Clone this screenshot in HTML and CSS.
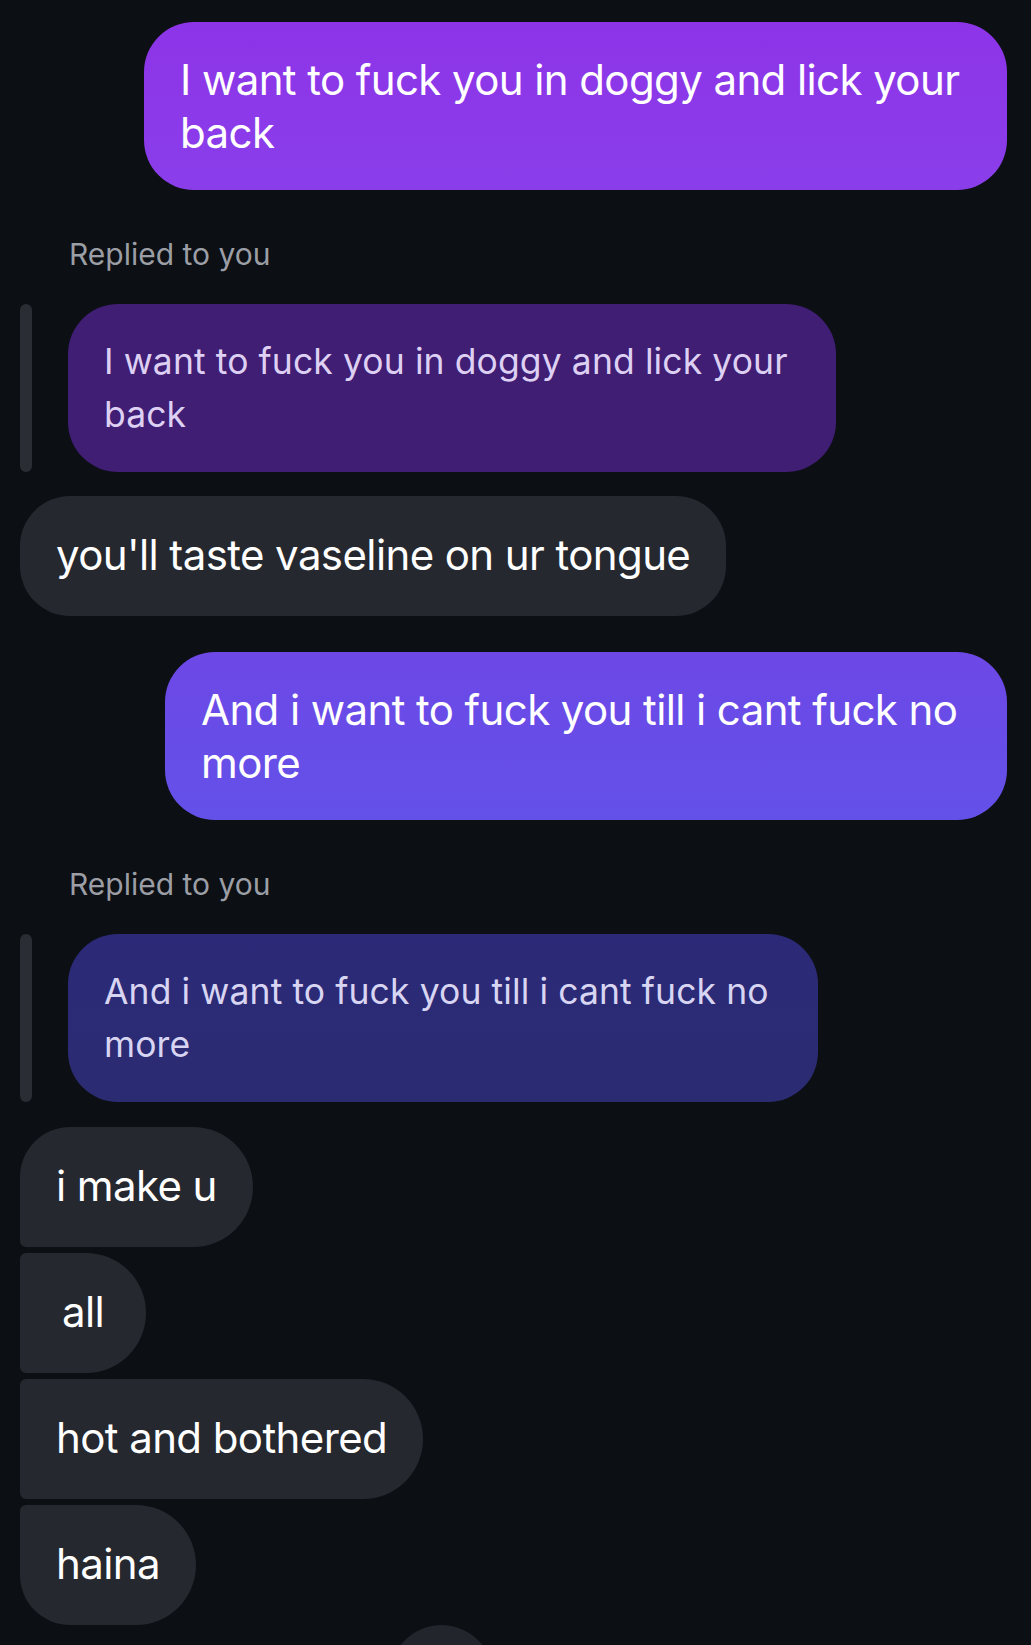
FILE: index.html
```html
<!DOCTYPE html>
<html lang="en">
<head>
<meta charset="utf-8">
<title>Chat</title>
<link rel="stylesheet" href="styles.css">
</head>
<body>
<main class="thread">
  <div class="row row-sent first">
    <div class="bubble sent sent-violet">I want to fuck you in doggy and lick your back</div>
  </div>

  <div class="reply-label">Replied to you</div>
  <div class="quote-row">
    <div class="quote-bar"></div>
    <div class="quote quote-violet">I want to fuck you in doggy and lick your back</div>
  </div>

  <div class="row row-recv gap-sm">
    <div class="bubble recv single">you'll taste vaseline on ur tongue</div>
  </div>

  <div class="row row-sent gap-md">
    <div class="bubble sent sent-indigo">And i want to fuck you till i cant fuck no more</div>
  </div>

  <div class="reply-label">Replied to you</div>
  <div class="quote-row">
    <div class="quote-bar"></div>
    <div class="quote quote-indigo">And i want to fuck you till i cant fuck no more</div>
  </div>

  <div class="stack">
    <div class="bubble recv single first-in-stack">i make u</div>
    <div class="bubble recv single mid-in-stack">all</div>
    <div class="bubble recv single mid-in-stack">hot and bothered</div>
    <div class="bubble recv single last-in-stack">haina</div>
  </div>

  <div class="peek"></div>
</main>
</body>
</html>
```

FILE: styles.css
```css
html, body {
  margin: 0;
  padding: 0;
  background: #0c0f14;
}

body {
  font-family: Inter, "Noto Sans", "DejaVu Sans", sans-serif;
  color: #ffffff;
  overflow: hidden;
}

.thread {
  display: flex;
  flex-direction: column;
  padding: 22px 24px 0 20px;
}

.row {
  display: flex;
}

.row-sent {
  justify-content: flex-end;
}

.row-recv {
  justify-content: flex-start;
}

.gap-sm {
  margin-top: 24px;
}

.gap-md {
  margin-top: 36px;
}

.bubble {
  box-sizing: border-box;
  font-size: 42px;
  line-height: 53px;
  padding: 31px 28px 31px 36px;
  border-radius: 50px;
  letter-spacing: -0.6px;
}

.single {
  min-height: 120px;
  min-width: 126px;
  display: flex;
  align-items: center;
  justify-content: center;
  padding-top: 0;
  padding-bottom: 3px;
  padding-right: 36px;
}

.sent-violet {
  width: 863px;
  background: linear-gradient(180deg, #8d34e8 0%, #8a3eea 100%);
}

.sent-indigo {
  width: 842px;
  background: linear-gradient(180deg, #6d48e7 0%, #6351e8 100%);
}

.recv {
  background: #25282e;
  color: #ffffff;
}

.reply-label {
  margin-top: 48px;
  margin-left: 49px;
  font-size: 30px;
  line-height: 32px;
  color: #9b9ea5;
  letter-spacing: 0;
}

.quote-row {
  display: flex;
  align-items: stretch;
  gap: 36px;
  margin-top: 34px;
}

.quote-bar {
  width: 12px;
  border-radius: 6px;
  background: #2a2d33;
  flex: none;
}

.quote {
  box-sizing: border-box;
  font-size: 35.5px;
  line-height: 53px;
  padding: 31px 28px 31px 36px;
  border-radius: 50px;
  color: #ddd0f3;
  letter-spacing: 0.1px;
}

.quote-violet {
  width: 768px;
  background: #3f1e74;
}

.quote-indigo {
  width: 750px;
  background: linear-gradient(180deg, #2c2a78 0%, #2b2b72 100%);
  color: #d8d5f3;
}

.stack {
  margin-top: 25px;
  display: flex;
  flex-direction: column;
  align-items: flex-start;
  gap: 6px;
}

.first-in-stack {
  border-radius: 50px 60px 60px 6px;
}

.mid-in-stack {
  border-radius: 6px 60px 60px 6px;
}

.last-in-stack {
  border-radius: 6px 60px 60px 50px;
}

.peek {
  margin-top: 0;
  margin-left: 370px;
  width: 103px;
  height: 110px;
  border-radius: 52px;
  background: #22252b;
}
```
